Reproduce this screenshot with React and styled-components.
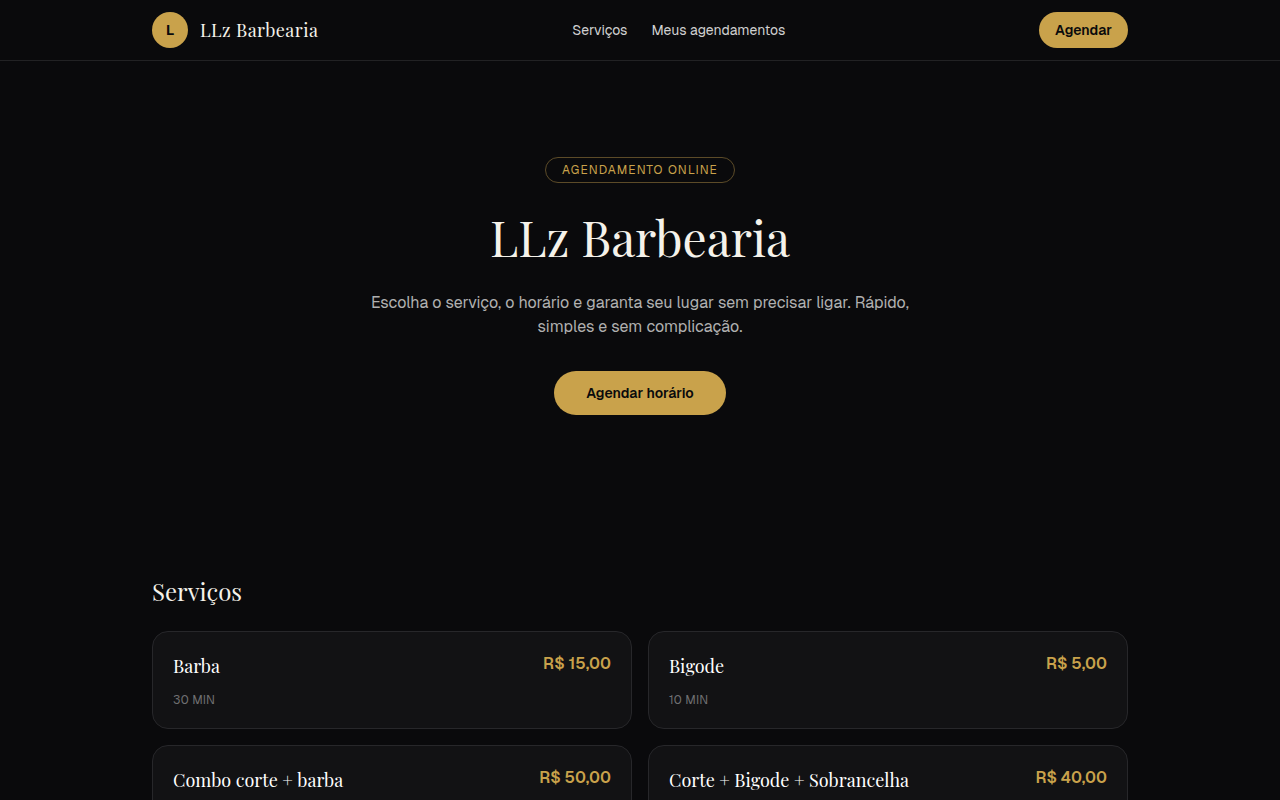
import React from 'react';
import styled, { createGlobalStyle, ThemeProvider } from 'styled-components';

const theme = {
  colors: {
    background: '#0a0a0c',
    surface: '#121214',
    border: '#27272a',
    headerBorder: '#222224',
    gold: '#c9a24b',
    goldBorder: '#5c4b28',
    ink: '#0a0a0c',
    cream: '#f5f2ea',
    white: '#ffffff',
    textSecondary: '#d0d0d0',
    textMuted: '#b0b0b0',
    textFaint: '#707072',
  },
  fonts: {
    sans: '"Geist", "Inter", "Liberation Sans", sans-serif',
    serif: '"Playfair Display", "Liberation Serif", serif',
  },
};

const GlobalStyle = createGlobalStyle`
  * {
    box-sizing: border-box;
  }

  body {
    margin: 0;
    background: ${props => props.theme.colors.background};
    color: ${props => props.theme.colors.cream};
    font-family: ${props => props.theme.fonts.sans};
    font-size: 16px;
    line-height: 24px;
    -webkit-font-smoothing: antialiased;
  }
`;

const Header = styled.header`
  border-bottom: 1px solid ${props => props.theme.colors.headerBorder};
`;

const Container = styled.div`
  width: 100%;
  max-width: 1024px;
  margin: 0 auto;
  padding: 0 24px;
`;

const HeaderRow = styled(Container)`
  display: flex;
  align-items: center;
  justify-content: space-between;
  padding-top: 12px;
  padding-bottom: 12px;
`;

const Brand = styled.a`
  display: flex;
  align-items: center;
  gap: 12px;
  color: ${props => props.theme.colors.cream};
  text-decoration: none;
`;

const BrandMark = styled.span`
  display: flex;
  align-items: center;
  justify-content: center;
  width: 36px;
  height: 36px;
  border-radius: 50%;
  background: ${props => props.theme.colors.gold};
  color: ${props => props.theme.colors.ink};
  font-size: 14px;
  font-weight: 700;
`;

const BrandName = styled.span`
  font-family: ${props => props.theme.fonts.serif};
  font-size: 18px;
  line-height: 28px;
  letter-spacing: 0.025em;
`;

const Nav = styled.nav`
  display: flex;
  gap: 24px;
`;

const NavLink = styled.a`
  color: ${props => props.theme.colors.textSecondary};
  font-size: 14px;
  line-height: 20px;
  text-decoration: none;

  &:hover {
    color: ${props => props.theme.colors.gold};
  }
`;

const Button = styled.button`
  padding: ${props => (props.$large ? '12px 32px' : '8px 16px')};
  border: none;
  border-radius: 22px;
  background: ${props => props.theme.colors.gold};
  color: ${props => props.theme.colors.ink};
  font-family: inherit;
  font-size: 14px;
  font-weight: 600;
  line-height: 20px;
  cursor: pointer;

  &:hover {
    opacity: 0.9;
  }
`;

const Hero = styled.section`
  display: flex;
  flex-direction: column;
  align-items: center;
  padding: 96px 24px;
  text-align: center;
`;

const Badge = styled.span`
  padding: 4px 16px;
  border: 1px solid ${props => props.theme.colors.goldBorder};
  border-radius: 13px;
  color: ${props => props.theme.colors.gold};
  font-size: 12px;
  line-height: 16px;
  letter-spacing: 0.1em;
  text-transform: uppercase;
`;

const HeroTitle = styled.h1`
  margin: 24px 0;
  font-family: ${props => props.theme.fonts.serif};
  font-size: 48px;
  font-weight: 400;
  line-height: 60px;
`;

const HeroText = styled.p`
  max-width: 576px;
  margin: 0 0 32px;
  color: ${props => props.theme.colors.textMuted};
`;

const Services = styled.section`
  padding: 64px 0;
`;

const SectionTitle = styled.h2`
  margin: 0 0 24px;
  font-family: ${props => props.theme.fonts.serif};
  font-size: 24px;
  font-weight: 400;
  line-height: 32px;
`;

const ServiceGrid = styled.div`
  display: grid;
  grid-template-columns: repeat(2, minmax(0, 1fr));
  gap: 16px;

  @media (max-width: 640px) {
    grid-template-columns: minmax(0, 1fr);
  }
`;

const Card = styled.article`
  padding: 20px;
  border: 1px solid ${props => props.theme.colors.border};
  border-radius: 16px;
  background: ${props => props.theme.colors.surface};
`;

const CardTop = styled.div`
  display: flex;
  align-items: flex-start;
  justify-content: space-between;
  gap: 16px;
`;

const CardTitle = styled.h3`
  margin: 0;
  color: ${props => props.theme.colors.white};
  font-family: ${props => props.theme.fonts.serif};
  font-size: 18px;
  font-weight: 400;
  line-height: 28px;
`;

const Price = styled.span`
  color: ${props => props.theme.colors.gold};
  font-weight: 600;
  white-space: nowrap;
`;

const Duration = styled.p`
  margin: 12px 0 0;
  color: ${props => props.theme.colors.textFaint};
  font-size: 12px;
  line-height: 16px;
  letter-spacing: 0.025em;
  text-transform: uppercase;
`;

const services = [
  { name: 'Barba', price: 'R$ 15,00', minutes: 30 },
  { name: 'Bigode', price: 'R$ 5,00', minutes: 10 },
  { name: 'Combo corte + barba', price: 'R$ 50,00', minutes: 60 },
  { name: 'Corte + Bigode + Sobrancelha', price: 'R$ 40,00', minutes: 50 },
];

function ServiceCard({ name, price, minutes }) {
  return (
    <Card>
      <CardTop>
        <CardTitle>{name}</CardTitle>
        <Price>{price}</Price>
      </CardTop>
      <Duration>{minutes} min</Duration>
    </Card>
  );
}

function App() {
  return (
    <ThemeProvider theme={theme}>
      <GlobalStyle />
      <Header>
        <HeaderRow>
          <Brand href="#">
            <BrandMark>L</BrandMark>
            <BrandName>LLz Barbearia</BrandName>
          </Brand>
          <Nav>
            <NavLink href="#servicos">Serviços</NavLink>
            <NavLink href="#agendamentos">Meus agendamentos</NavLink>
          </Nav>
          <Button type="button">Agendar</Button>
        </HeaderRow>
      </Header>
      <main>
        <Hero>
          <Badge>Agendamento online</Badge>
          <HeroTitle>LLz Barbearia</HeroTitle>
          <HeroText>
            Escolha o serviço, o horário e garanta seu lugar sem precisar ligar. Rápido, simples e
            sem complicação.
          </HeroText>
          <Button type="button" $large>Agendar horário</Button>
        </Hero>
        <Services id="servicos">
          <Container>
            <SectionTitle>Serviços</SectionTitle>
            <ServiceGrid>
              {services.map(service => (
                <ServiceCard key={service.name} {...service} />
              ))}
            </ServiceGrid>
          </Container>
        </Services>
      </main>
    </ThemeProvider>
  );
}

export default App;
